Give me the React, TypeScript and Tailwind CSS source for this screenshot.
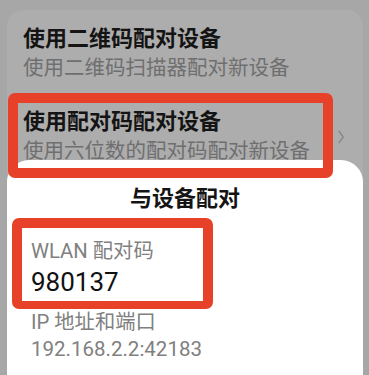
import React from "react";

const font = { fontFamily: 'Roboto, "Noto Sans CJK SC", sans-serif' };

function Row({ title, sub, chevron }: { title: string; sub: string; chevron?: boolean }) {
  return (
    <div className="flex items-center pl-[16px] pr-[19px] pt-[15px] pb-[12px]">
      <div className="flex-1 flex flex-col gap-[2px]">
        <div className="text-[22px] leading-[28px] font-bold text-[#141414]">{title}</div>
        <div className="text-[20.5px] leading-[26px] text-[#6f6f6f]">{sub}</div>
      </div>
      {chevron && (
        <svg width="6" height="14" viewBox="0 0 6 14" className="mt-[2px]">
          <polyline points="0.8,0.8 5.2,7 0.8,13.2" fill="none" stroke="#858585" strokeWidth="1.3" />
        </svg>
      )}
    </div>
  );
}

export default function App() {
  return (
    <div className="relative w-[369px] h-[375px] overflow-hidden bg-[#a7a7a7]" style={font}>
      <div className="ml-[7px] mr-[6px] mt-[10px] rounded-[16px] bg-[#adadad] h-[400px]">
        <Row title="使用二维码配对设备" sub="使用二维码扫描器配对新设备" />
        <Row title="使用配对码配对设备" sub="使用六位数的配对码配对新设备" chevron />
      </div>

      <div className="absolute left-[7px] right-[6px] top-[160px] bottom-[-30px] rounded-t-[22px] bg-white pl-[24px] pt-[25px]">
        <div className="pr-[24px] text-center text-[22px] leading-[28px] font-bold text-[#141414]">与设备配对</div>
        <div className="mt-[25px] text-[20.3px] leading-[26px] text-[#808080]">WLAN 配对码</div>
        <div className="mt-[2px] text-[26px] leading-[32px] text-[#111111]">980137</div>
        <div className="mt-[11px] text-[20.3px] leading-[26px] text-[#808080]">IP 地址和端口</div>
        <div className="mt-[1px] text-[20.5px] leading-[26px] text-[#808080]">192.168.2.2:42183</div>
      </div>

      <div className="absolute left-[8px] top-[93px] w-[325px] h-[85px] rounded-[7px] border-[10px] border-[#e8412a]" />
      <div className="absolute left-[12px] top-[218px] w-[201px] h-[91px] rounded-[7px] border-[10px] border-b-[8px] border-[#e8412a]" />
    </div>
  );
}
